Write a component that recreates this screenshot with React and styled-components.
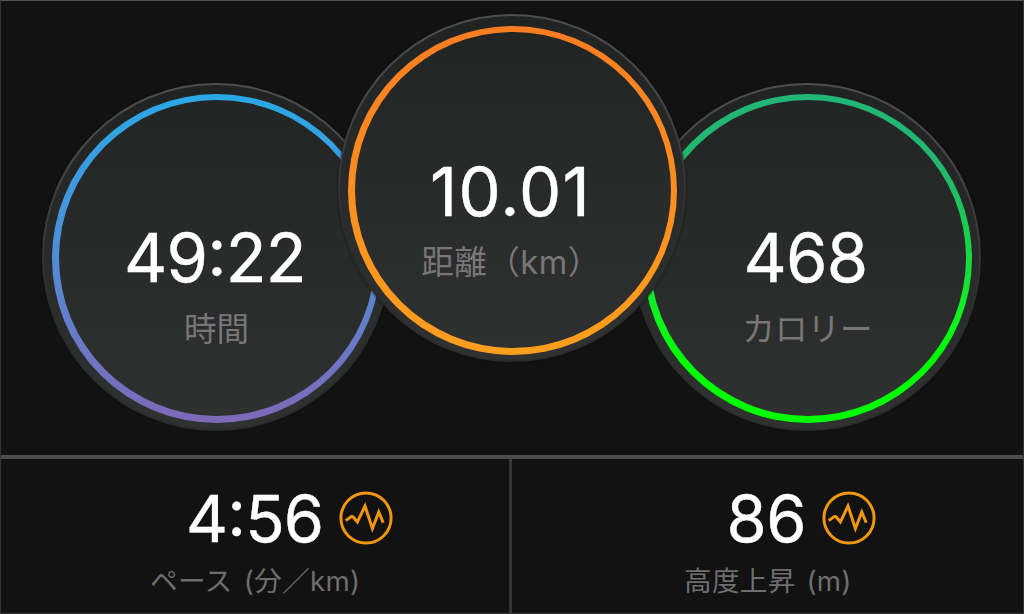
import React from "react";
import styled, { createGlobalStyle } from "styled-components";

const Global = createGlobalStyle`
  *, *::before, *::after { box-sizing: border-box; }
  body { margin: 0; background: #121212; }
`;

const Screen = styled.main`
  width: 1024px;
  height: 614px;
  display: flex;
  flex-direction: column;
  overflow: hidden;
  background: #121212;
  border: 1px solid #343434;
  border-top-color: #555;
  font-family: Inter, "Noto Sans CJK JP", sans-serif;
`;

const Dials = styled.section`
  height: 454px;
  display: flex;
  align-items: flex-start;
  padding: 13px 0 0 41px;
`;

const Dial = styled.div`
  flex: none;
  width: 348px;
  height: 348px;
  padding: ${(p) => (p.$raised ? 9.5 : 8.5)}px 8px 0;
  border: 2px solid transparent;
  border-radius: 50%;
  background:
    linear-gradient(#212222, #303131) padding-box,
    linear-gradient(#4e4e4e, #474747 20%, #353535 50%, #2a2b2b 65%, #2b2c2c) border-box;
  box-shadow: 0 0 2px #0c0c0c;
  margin-top: ${(p) => (p.$raised ? 0 : 69)}px;
  margin-left: ${(p) => p.$overlap || 0}px;
  ${(p) => p.$raised && "position: relative; z-index: 1;"}
`;

const Ring = styled.div`
  width: 329px;
  height: 329px;
  padding: 6.5px;
  border-radius: 50%;
  background: linear-gradient(${(p) => p.$stops});
`;

const Face = styled.div`
  height: 100%;
  border-radius: 50%;
  display: flex;
  flex-direction: column;
  align-items: center;
  padding-top: ${(p) => (p.$raised ? 119 : 117)}px;
  background: linear-gradient(#232424, #2f3030);
`;

const Value = styled.div`
  height: 82px;
  line-height: 82px;
  padding-top: ${(p) => p.$drop || 0}px;
  font-size: ${(p) => p.$size || 67}px;
  letter-spacing: ${(p) => p.$track || 0}px;
  margin-left: ${(p) => p.$shift || 0}px;
  color: #fff;
  -webkit-text-stroke: 0.4px #fff;
  white-space: nowrap;
`;

const Colon = styled.span`
  display: inline-block;
  transform: translateY(-6px);
`;

const Label = styled.div`
  height: 48px;
  line-height: 48px;
  margin-top: ${(p) => p.$gap ?? 6}px;
  margin-left: ${(p) => p.$shift || 0}px;
  font-weight: 400;
  font-size: ${(p) => p.$size || 32.6}px;
  letter-spacing: ${(p) => p.$track || 0}px;
  color: #777;
  white-space: nowrap;
`;

const Stats = styled.section`
  flex: 1;
  display: grid;
  grid-template-columns: 511px 1fr;
  border-top: 4px solid #4b4b4b;
`;

const Stat = styled.div`
  display: flex;
  flex-direction: column;
  padding: 18px 0 0 ${(p) => p.$left}px;
  border-right: ${(p) => (p.$divided ? "3px solid #353535" : "0")};
`;

const StatRow = styled.div`
  display: flex;
  align-items: center;
  height: 82px;
  padding-left: ${(p) => p.$indent}px;
  gap: ${(p) => p.$gap}px;
`;

const StatLabel = styled(Label)`
  height: 40px;
  line-height: 40px;
  margin-top: 2px;
  word-spacing: 3px;
  color: #6e6e6e;
`;

const Icon = styled.svg`
  flex: none;
  width: 54px;
  height: 54px;
  fill: none;
  stroke: #f0960f;
  stroke-width: 3;
`;

const Pulse = () => (
  <Icon viewBox="0 0 54 54">
    <circle cx="27" cy="27" r="25.1" />
    <path d="M6.7 29.6 L12 25.7 Q13.4 25 14.4 26.2 L18.4 31 L26 15 L33.4 37.5 L39.8 21 L44.2 31.7" />
  </Icon>
);

export default function App() {
  return (
    <>
      <Global />
      <Screen>
        <Dials>
          <Dial>
            <Ring $stops="#29a8e6, #4c90d8 45%, #7f68b8">
              <Face>
                <Value $track={-0.8} $shift={-3}>49<Colon>:</Colon>22</Value>
                <Label>時間</Label>
              </Face>
            </Ring>
          </Dial>
          <Dial $raised $overlap={-52}>
            <Ring $stops="#fb7d22, #fe9f1e">
              <Face $raised>
                <Value $track={1.2} $shift={-4}>10.01</Value>
                <Label $shift={-3} $gap={5} $track={0.5}>距離（km）</Label>
              </Face>
            </Ring>
          </Dial>
          <Dial $overlap={-53}>
            <Ring $stops="#22b677, #22b86b 25%, #0df51a 70%, #00ff00 80%">
              <Face>
                <Value $track={-0.8} $shift={-4}>468</Value>
                <Label>カロリー</Label>
              </Face>
            </Ring>
          </Dial>
        </Dials>
        <Stats>
          <Stat $divided $left={149}>
            <StatRow $indent={36} $gap={16}>
              <Value $size={65} $drop={1} $track={-0.8}>4<Colon>:</Colon>56</Value>
              <Pulse />
            </StatRow>
            <StatLabel $size={27.7} $track={0.3}>ペース (分／km)</StatLabel>
          </Stat>
          <Stat $left={172}>
            <StatRow $indent={42.5} $gap={16}>
              <Value $size={65} $drop={1} $track={-0.4}>86</Value>
              <Pulse />
            </StatRow>
            <StatLabel $size={27.7} $track={0.2}>高度上昇 (m)</StatLabel>
          </Stat>
        </Stats>
      </Screen>
    </>
  );
}
